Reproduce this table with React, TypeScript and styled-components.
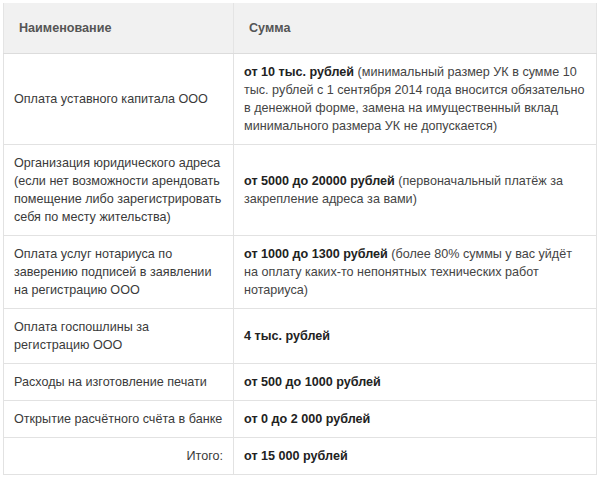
import React from "react";
import styled, { createGlobalStyle } from "styled-components";

const Global = createGlobalStyle`
  html, body { margin: 0; padding: 0; background: #ffffff; }
  body { font-family: "Liberation Sans", Arial, sans-serif; }
`;

const Page = styled.div`
  padding: 3px 4px 3px 3px;
  background: #fff;
`;

const Table = styled.table`
  width: 594px;
  border-collapse: collapse;
  table-layout: fixed;
  font-size: 12.6px;
  line-height: 18px;
  color: #3a3a3a;
`;

const HeadCell = styled.th`
  background: #f1f1f1;
  color: #555;
  font-weight: bold;
  text-align: left;
  height: 50px;
  padding: 0 15px;
  box-sizing: border-box;
  border-left: 1px solid #e4e4e4;
  border-right: 1px solid #e4e4e4;
  border-bottom: 1px solid #dcdcdc;
`;

const Cell = styled.td<{ $align?: "left" | "right" }>`
  padding: 9px 10px 9px 10px;
  text-align: ${(p) => p.$align ?? "left"};
  vertical-align: middle;
  border: 1px solid #e2e2e2;
`;

const Strong = styled.b`
  font-weight: bold;
  color: #222;
`;

const Note = styled.span`
  color: #444;
`;

type Row = { name: string; amount: string; note?: string; align?: "left" | "right" };

const rows: Row[] = [
  {
    name: "Оплата уставного капитала ООО",
    amount: "от 10 тыс. рублей",
    note:
      "(минимальный размер УК в сумме 10 тыс. рублей с 1 сентября 2014 года вносится обязательно в денежной форме, замена на имущественный вклад минимального размера УК не допускается)",
  },
  {
    name:
      "Организация юридического адреса (если нет возможности арендовать помещение либо зарегистрировать себя по месту жительства)",
    amount: "от 5000 до 20000 рублей",
    note: "(первоначальный платёж за закрепление адреса за вами)",
  },
  {
    name: "Оплата услуг нотариуса по заверению подписей в заявлении на регистрацию ООО",
    amount: "от 1000 до 1300 рублей",
    note: "(более 80% суммы у вас уйдёт на оплату каких-то непонятных технических работ нотариуса)",
  },
  { name: "Оплата госпошлины за регистрацию ООО", amount: "4 тыс. рублей" },
  { name: "Расходы на изготовление печати", amount: "от 500 до 1000 рублей" },
  { name: "Открытие расчётного счёта в банке", amount: "от 0 до 2 000 рублей" },
  { name: "Итого:", amount: "от 15 000 рублей", align: "right" },
];

export default function App() {
  return (
    <Page>
      <Global />
      <Table>
        <colgroup>
          <col style={{ width: 230 }} />
          <col />
        </colgroup>
        <thead>
          <tr>
            <HeadCell>Наименование</HeadCell>
            <HeadCell>Сумма</HeadCell>
          </tr>
        </thead>
        <tbody>
          {rows.map((r, i) => (
            <tr key={i}>
              <Cell $align={r.align}>{r.name}</Cell>
              <Cell>
                <Strong>{r.amount}</Strong>
                {r.note ? <Note> {r.note}</Note> : null}
              </Cell>
            </tr>
          ))}
        </tbody>
      </Table>
    </Page>
  );
}
